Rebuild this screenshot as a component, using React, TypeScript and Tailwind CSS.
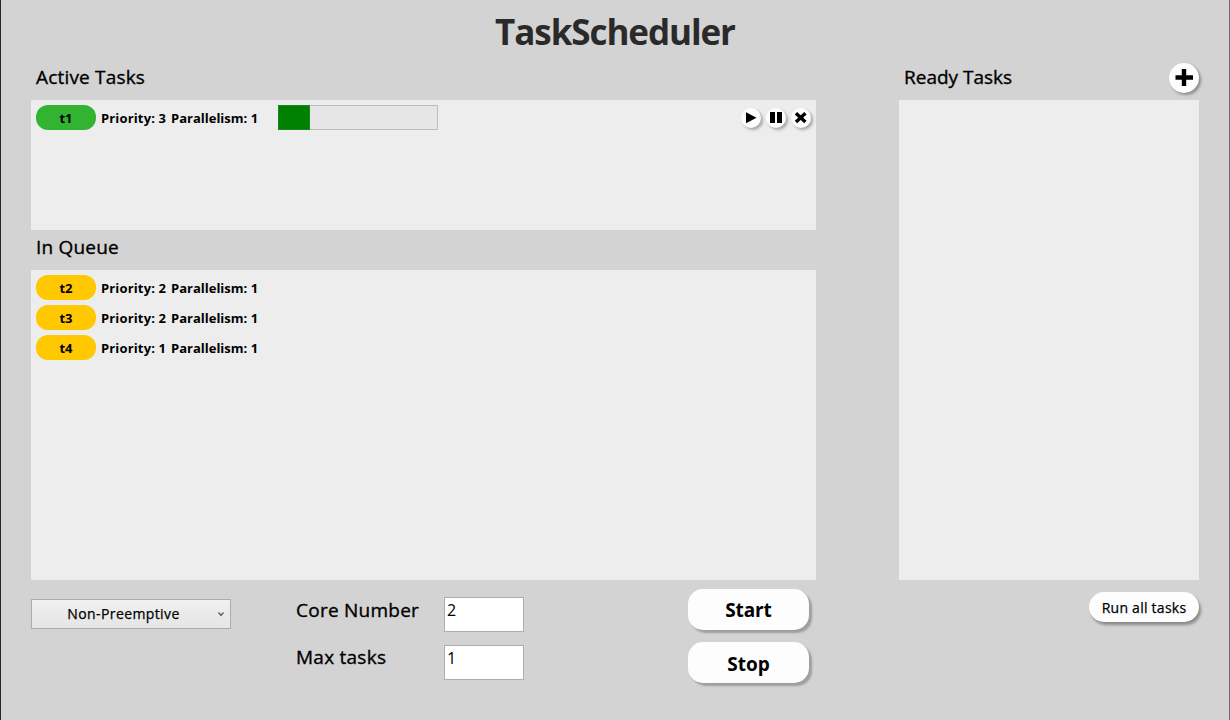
import type { ReactNode } from 'react';

type Task = { name: string; priority: number; parallelism: number };

const queued: Task[] = [
  { name: 't2', priority: 2, parallelism: 1 },
  { name: 't3', priority: 2, parallelism: 1 },
  { name: 't4', priority: 1, parallelism: 1 },
];

function Heading({ children, className }: { children: ReactNode; className: string }) {
  return (
    <h2 className={`pl-[5px] text-[19px] leading-[34px] whitespace-nowrap [-webkit-text-stroke:0.35px_black] ${className}`}>
      {children}
    </h2>
  );
}

function TaskInfo({ task, color }: { task: Task; color: string }) {
  return (
    <div className="flex h-[25px] items-center text-[13px] leading-[26px] font-bold whitespace-nowrap">
      <span className={`h-[25px] w-[60px] rounded-[12px] text-center ${color}`}>{task.name}</span>
      <span className="ml-[5px] h-[25px] w-[70px] tracking-[0.15px]">Priority: {task.priority}</span>
      <span className="h-[25px] w-[107px]">Parallelism: {task.parallelism}</span>
    </div>
  );
}

function RoundButton({ label, children }: { label: string; children: ReactNode }) {
  return (
    <button
      aria-label={label}
      className="flex size-5 items-center justify-center rounded-full bg-[#fdfdfd] shadow-[2px_2px_3px_rgba(0,0,0,0.3)]"
    >
      {children}
    </button>
  );
}

function Field({ label, value, className }: { label: string; value: string; className: string }) {
  return (
    <div className="flex h-[35px]">
      <label
        className={`w-[148px] text-[19px] whitespace-nowrap [-webkit-text-stroke:0.35px_black] ${className}`}
      >
        {label}
      </label>
      <div className="h-[35px] w-20 border border-[#abadb3] bg-white pl-[2px] text-[16px] leading-[25px]">{value}</div>
    </div>
  );
}

export default function App() {
  return (
    <div className="flex h-[720px] w-[1230px] flex-col border-x border-l-[#252733] border-r-[#6d6f73] bg-[#d3d3d3] font-['Open_Sans','Noto_Sans',sans-serif] text-black">
      <h1 className="h-[60px] pt-[5px] text-center text-[35px] leading-[53px] font-bold tracking-[-1.08px] text-[#2a2a2a]">
        TaskScheduler
      </h1>
      <main className="flex pl-[30px]">
        <section className="w-[785px]">
          <div className="h-10">
            <Heading className="tracking-[0.18px]">Active Tasks</Heading>
          </div>
          <div className="flex h-[130px] items-start bg-[#ededed] px-[5px] pt-[5px]">
            <TaskInfo task={{ name: 't1', priority: 3, parallelism: 1 }} color="bg-[#32b432]" />
            <div className="h-[25px] w-40 border border-[#bcbcbc] bg-[#e6e6e6]">
              <div className="-mt-px -ml-px h-[25px] w-8 border border-[#1b861b] bg-[#008000]" />
            </div>
            <div className="ml-auto flex gap-[5px] pt-[3px]">
              <RoundButton label="Run">
                <svg width="20" height="20" viewBox="0 0 20 20">
                  <path d="M5 4.2V15.2L15.5 9.7Z" />
                </svg>
              </RoundButton>
              <RoundButton label="Pause">
                <svg width="20" height="20" viewBox="0 0 20 20">
                  <path d="M4 4H9V15H4ZM11 4H16V15H11Z" />
                </svg>
              </RoundButton>
              <RoundButton label="Remove">
                <svg width="20" height="20" viewBox="0 0 20 20">
                  <path d="M5 5.2L14.4 14M14.4 5.2L5 14" stroke="#000" strokeWidth="3.4" />
                </svg>
              </RoundButton>
            </div>
          </div>
          <div className="h-10">
            <Heading className="tracking-[0.2px]">In Queue</Heading>
          </div>
          <div className="flex h-[310px] flex-col gap-[5px] bg-[#ededed] p-[5px]">
            {queued.map((task) => (
              <TaskInfo key={task.name} task={task} color="bg-[#ffc800]" />
            ))}
          </div>
        </section>
        <section className="ml-[83px] w-[300px]">
          <div className="flex h-10 justify-between">
            <Heading className="tracking-[0px]">Ready Tasks</Heading>
            <button
              aria-label="Add task"
              className="mt-[3px] flex size-[30px] items-center justify-center rounded-full bg-[#fdfdfd] shadow-[2px_2px_3px_rgba(0,0,0,0.35)]"
            >
              <svg width="30" height="30" viewBox="0 0 30 30">
                <path d="M15 6V23M6.5 14.5H24" stroke="#000" strokeWidth="4.4" />
              </svg>
            </button>
          </div>
          <div className="h-[480px] bg-[#ededed]" />
        </section>
      </main>
      <footer className="flex items-start pl-[30px]">
        <div className="mt-[19px] flex h-[30px] w-[200px] items-center border border-[#acacac] bg-linear-to-b from-[#f0f0f0] to-[#e5e5e5]">
          <span className="w-[183px] pb-[2px] text-center text-[14px] tracking-[0.4px] [-webkit-text-stroke:0.25px_black]">
            Non-Preemptive
          </span>
          <svg width="6" height="5" viewBox="0 0 6 5" className="ml-[3px]">
            <path d="M0.5 0.5L3 3.5L5.5 0.5" fill="none" stroke="#606060" strokeWidth="1.4" />
          </svg>
        </div>
        <div className="mt-[17px] ml-[65px] flex flex-col gap-[13px]">
          <Field label="Core Number" value="2" className="leading-[26px] tracking-[0.25px]" />
          <Field label="Max tasks" value="1" className="leading-[24px] tracking-[0.25px]" />
        </div>
        <div className="mt-[9px] ml-[164px] flex flex-col gap-[13px] text-[19px] font-bold">
          <button className="h-[41px] w-[121px] rounded-[15px] bg-[#fdfdfd] pt-px tracking-[-0.1px] shadow-[3px_3px_2px_rgba(0,0,0,0.25)]">
            Start
          </button>
          <button className="-mt-px h-[41px] w-[121px] rounded-[15px] bg-[#fdfdfd] pt-[3px] shadow-[3px_3px_2px_rgba(0,0,0,0.25)]">
            Stop
          </button>
        </div>
        <button className="mt-[12px] ml-[280px] h-[30px] w-[110px] rounded-[15px] bg-[#fdfdfd] text-[14px] tracking-[0.25px] shadow-[2px_3px_3px_rgba(0,0,0,0.35)] [-webkit-text-stroke:0.25px_black]">
          Run all tasks
        </button>
      </footer>
    </div>
  );
}
